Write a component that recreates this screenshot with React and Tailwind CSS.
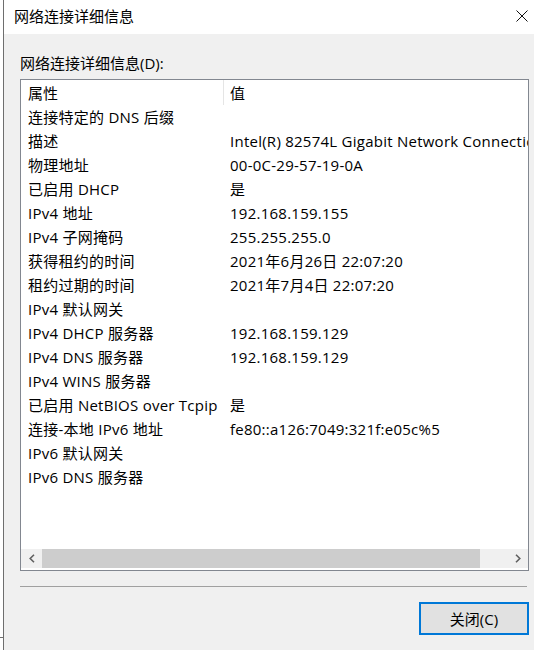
const rows = [
  ['连接特定的 DNS 后缀', ''],
  ['描述', 'Intel(R) 82574L Gigabit Network Connection'],
  ['物理地址', '00-0C-29-57-19-0A'],
  ['已启用 DHCP', '是'],
  ['IPv4 地址', '192.168.159.155'],
  ['IPv4 子网掩码', '255.255.255.0'],
  ['获得租约的时间', '2021年6月26日 22:07:20'],
  ['租约过期的时间', '2021年7月4日 22:07:20'],
  ['IPv4 默认网关', ''],
  ['IPv4 DHCP 服务器', '192.168.159.129'],
  ['IPv4 DNS 服务器', '192.168.159.129'],
  ['IPv4 WINS 服务器', ''],
  ['已启用 NetBIOS over Tcpip', '是'],
  ['连接-本地 IPv6 地址', 'fe80::a126:7049:321f:e05c%5'],
  ['IPv6 默认网关', ''],
  ['IPv6 DNS 服务器', ''],
];

function Row({ name, value }) {
  return (
    <div className="flex h-[24px] items-center whitespace-nowrap tracking-[0.25px]">
      <div className="w-[209px] shrink-0 pl-[7px]">{name}</div>
      <div className="shrink-0">{value}</div>
    </div>
  );
}

function Chevron({ left }) {
  return (
    <svg width="6" height="9" viewBox="0 0 6 9" fill="none" stroke="#606060" strokeWidth="1.6">
      <path d={left ? 'M5 0.8 L1.2 4.5 L5 8.2' : 'M1 0.8 L4.8 4.5 L1 8.2'} />
    </svg>
  );
}

export default function App() {
  return (
    <div
      className="flex h-[650px] w-[534px] overflow-hidden bg-white text-[15px] leading-[20px] text-black"
      style={{ fontFamily: '"Open Sans", "Noto Sans CJK SC", sans-serif' }}
    >
      <div className="flex w-[4px] shrink-0 flex-col">
        <div className="h-[637px] border-r border-[#6e6e6e]" />
        <div className="h-px bg-[#6e6e6e]" />
        <div className="flex-1 border-r border-[#6e6e6e]" />
      </div>

      <div className="flex min-w-0 flex-1 flex-col">
        <div className="flex h-[34px] shrink-0 items-center justify-between bg-white pb-[2px] pl-[10px] pr-[6px]">
          <span>网络连接详细信息</span>
          <svg width="12" height="12" viewBox="0 0 12 12" stroke="#111" strokeWidth="1">
            <path d="M0.5 0.5 L11.5 11.5 M11.5 0.5 L0.5 11.5" />
          </svg>
        </div>

        <div className="flex flex-1 flex-col bg-[#f0f0f0] pl-[16px] pr-[5px]">
          <div className="pt-[19px] pb-[6px]">网络连接详细信息(D):</div>

          <div className="flex h-[492px] flex-col overflow-hidden border border-[#828790] bg-white">
            <div className="flex h-[25px] items-center whitespace-nowrap">
              <div className="flex h-full w-[203px] shrink-0 items-center border-r border-[#e5e5e5] pl-[7px]">属性</div>
              <div className="pl-[6px]">值</div>
            </div>
            {rows.map(([name, value]) => (
              <Row key={name} name={name} value={value} />
            ))}
            <div className="flex-1" />
            <div className="mb-[2px] flex h-[19px] shrink-0 items-stretch bg-[#f0f0f0]">
              <div className="flex w-[21px] items-center justify-center">
                <Chevron left />
              </div>
              <div className="w-[438px] bg-[#cdcdcd]" />
              <div className="flex-1" />
              <div className="flex w-[21px] items-center justify-center">
                <Chevron />
              </div>
            </div>
          </div>

          <div className="mt-[15px] mr-[2px] h-px bg-[#a0a0a0]" />

          <div className="mt-[15px] flex justify-end">
            <button className="flex h-[33px] w-[110px] items-center justify-center border-2 border-[#0078d7] bg-[#e1e1e1] text-[15px]">
              关闭(C)
            </button>
          </div>
        </div>
      </div>
    </div>
  );
}
